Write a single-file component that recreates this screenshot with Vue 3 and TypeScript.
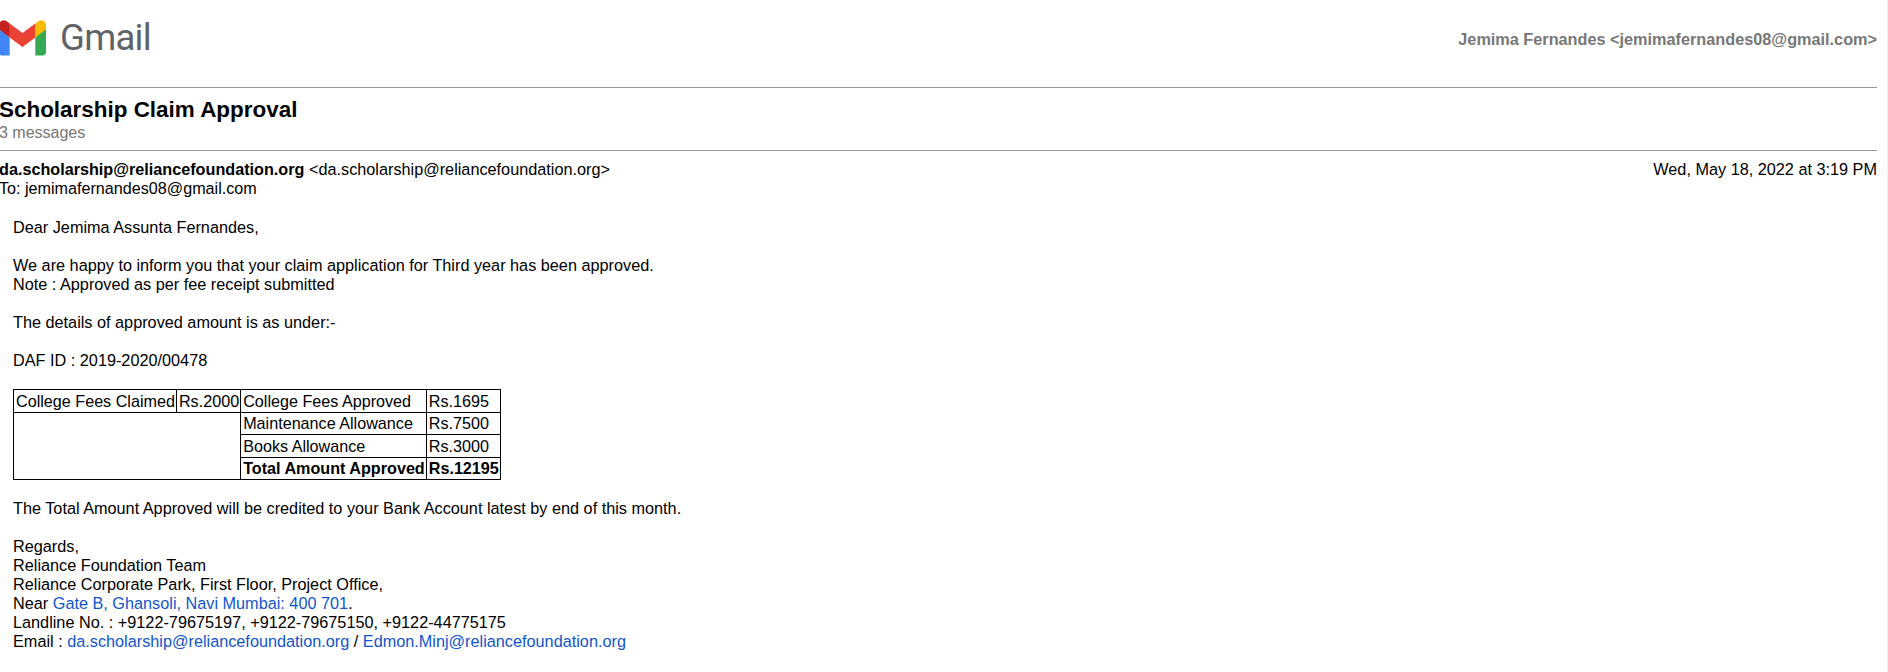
<script setup lang="ts">
const rows: { label: string; value: string }[] = [
  { label: 'Maintenance Allowance', value: 'Rs.7500' },
  { label: 'Books Allowance', value: 'Rs.3000' },
]
</script>

<template>
  <div class="page">
    <header class="top">
      <div class="brand">
        <svg class="mark" viewBox="0 0 256 193" aria-hidden="true">
          <path fill="#4285F4" d="M58.182 192.05V93.14L27.507 65.077 0 49.504v125.091c0 9.658 7.825 17.455 17.455 17.455h40.727Z" />
          <path fill="#34A853" d="M197.818 192.05h40.727c9.659 0 17.455-7.826 17.455-17.455V49.505l-31.156 17.837-27.026 25.798v98.91Z" />
          <path fill="#EA4335" d="m58.182 93.14-4.174-38.647 4.174-36.989L128 69.868l69.818-52.364 4.669 34.992-4.669 40.644L128 145.504z" />
          <path fill="#FBBC04" d="M197.818 17.504V93.14L256 49.504V26.231c0-21.585-24.64-33.89-41.89-20.945l-16.292 12.218Z" />
          <path fill="#C5221F" d="m0 49.504 26.759 20.07L58.182 93.14V17.504L41.89 5.286C24.61-7.66 0 4.646 0 26.23v23.273Z" />
        </svg>
        <span class="word">Gmail</span>
      </div>
      <div class="account">Jemima Fernandes &lt;jemimafernandes08@gmail.com&gt;</div>
    </header>
    <hr class="rule" />
    <section class="subject">
      <h1>Scholarship Claim Approval</h1>
      <div class="count">3 messages</div>
    </section>
    <hr class="rule" />
    <section class="meta">
      <div class="from">
        <span><b>da.scholarship@reliancefoundation.org</b> &lt;da.scholarship@reliancefoundation.org&gt;</span>
        <span>Wed, May 18, 2022 at 3:19 PM</span>
      </div>
      <div class="to">To: jemimafernandes08@gmail.com</div>
    </section>
    <main class="body">
      <p>Dear Jemima Assunta Fernandes,</p>
      <p>We are happy to inform you that your claim application for Third year has been approved.<br />Note : Approved as per fee receipt submitted</p>
      <p>The details of approved amount is as under:-</p>
      <p>DAF ID : 2019-2020/00478</p>
      <table>
        <tbody>
          <tr>
            <td>College Fees Claimed</td>
            <td>Rs.2000</td>
            <td>College Fees Approved</td>
            <td>Rs.1695</td>
          </tr>
          <tr>
            <td colspan="2" rowspan="3"></td>
            <td>{{ rows[0].label }}</td>
            <td>{{ rows[0].value }}</td>
          </tr>
          <tr>
            <td>{{ rows[1].label }}</td>
            <td>{{ rows[1].value }}</td>
          </tr>
          <tr>
            <td><b>Total Amount Approved</b></td>
            <td><b>Rs.12195</b></td>
          </tr>
        </tbody>
      </table>
      <p>The Total Amount Approved will be credited to your Bank Account latest by end of this month.</p>
      <p>Regards,<br />Reliance Foundation Team<br />Reliance Corporate Park, First Floor, Project Office,<br />Near <a>Gate B, Ghansoli, Navi Mumbai: 400 701</a>.<br />Landline No. : +9122-79675197, +9122-79675150, +9122-44775175<br />Email : <a>da.scholarship@reliancefoundation.org</a> / <a>Edmon.Minj@reliancefoundation.org</a></p>
    </main>
  </div>
</template>

<style>
html, body { margin: 0; background: #fff; overflow: hidden; }
</style>

<style scoped>
.page {
  box-sizing: border-box;
  width: 1888px;
  height: 672px;
  padding-right: 10px;
  border-right: 1px solid #f1f1f1;
  overflow: hidden;
  font-family: "Liberation Sans", Arial, sans-serif;
  font-size: 16.25px;
  line-height: 19px;
  color: #000;
}
.top {
  height: 87px;
  display: flex;
  justify-content: space-between;
  align-items: flex-start;
}
.brand { display: flex; align-items: center; margin-top: 19px; height: 38px; }
.mark { width: 47px; height: 36px; margin-left: -1px; }
.word {
  font-family: Roboto, sans-serif;
  font-size: 36.5px;
  line-height: 38px;
  color: #5f6368;
  margin-left: 14px;
  letter-spacing: -0.7px;
}
.account { margin-top: 30px; font-weight: 700; color: #777; }
.rule { height: 1px; margin: 0; border: 0; background: #999; }
.subject { height: 62px; margin-left: -1px; }
h1 { margin: 0; padding-top: 9px; font-size: 22.45px; line-height: 26px; font-weight: 700; }
.count { color: #777; font-size: 16px; line-height: 19px; }
.meta { padding-top: 9px; margin-left: -1px; }
.from { display: flex; justify-content: space-between; }
.from b { font-size: 16.2px; }
.to { font-size: 16.15px; }
.body { padding: 20px 0 0 13px; }
p { margin: 0 0 19px; }
table { border-collapse: collapse; margin: 0 0 19px; }
td { border: 1px solid #000; padding: 1px 1px 1px 2px; font-size: 16.17px; line-height: 19px; }
tr:nth-child(odd) td { line-height: 20px; }
a { color: #1155cc; }
</style>
